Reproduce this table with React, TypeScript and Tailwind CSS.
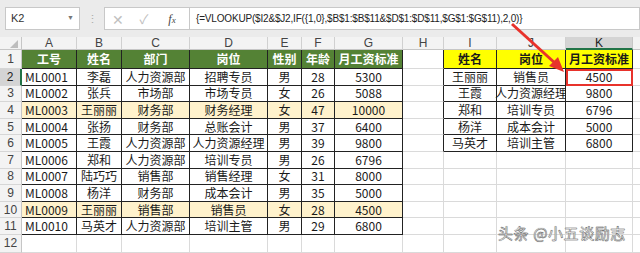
import React from 'react';

const cols = ['A', 'B', 'C', 'D', 'E', 'F', 'G', 'H', 'I', 'J', 'K'];

const main: string[][] = [
  ['工号', '姓名', '部门', '岗位', '性别', '年龄', '月工资标准'],
  ['ML0001', '李磊', '人力资源部', '招聘专员', '男', '28', '5300'],
  ['ML0002', '张兵', '市场部', '市场专员', '女', '26', '5088'],
  ['ML0003', '王丽丽', '财务部', '财务经理', '女', '47', '10000'],
  ['ML0004', '张扬', '财务部', '总账会计', '男', '37', '6400'],
  ['ML0005', '王霞', '人力资源部', '人力资源经理', '男', '39', '9800'],
  ['ML0006', '郑和', '人力资源部', '培训专员', '男', '26', '6796'],
  ['ML0007', '陆巧巧', '销售部', '销售经理', '女', '31', '8000'],
  ['ML0008', '杨洋', '财务部', '成本会计', '男', '35', '5000'],
  ['ML0009', '王丽丽', '销售部', '销售员', '女', '28', '4500'],
  ['ML0010', '马英才', '人力资源部', '培训主管', '男', '29', '6800'],
];

const lookup: string[][] = [
  ['姓名', '岗位', '月工资标准'],
  ['王丽丽', '销售员', '4500'],
  ['王霞', '人力资源经理', '9800'],
  ['郑和', '培训专员', '6796'],
  ['杨洋', '成本会计', '5000'],
  ['马英才', '培训主管', '6800'],
];

const font = 'font-["Noto_Sans_CJK_SC","Liberation_Sans",sans-serif]';

function Cell({ r, c }: { r: number; c: number }) {
  // r: 1..12, c: 0..10 (A..K)
  const inMain = r <= 11 && c <= 6;
  const inLookup = r <= 6 && c >= 8;
  let text = '';
  let cls = 'border-r border-b border-[#dadada] bg-white';
  if (inMain) {
    text = main[r - 1][c];
    cls = 'border-r border-b border-[#222]';
    if (r === 1) cls += ' bg-[#548235] text-white font-bold';
    else if (r === 4 || r === 10) cls += ' bg-[#fff2cc] text-[#1a1a1a]';
    else cls += ' bg-white text-[#1a1a1a]';
  } else if (inLookup) {
    text = lookup[r - 1][c - 8];
    cls = 'border-r border-b border-[#222] text-[#1a1a1a]';
    cls += r === 1 ? ' bg-[#ffff00] font-bold' : ' bg-white';
  } else if (c === 7 && r <= 6) {
    cls = 'border-r border-b border-r-[#222] border-b-[#dadada] bg-white';
  }
  const left = inMain && c === 0 && r > 1;
  const selected = r === 2 && c === 10;
  return (
    <div
      className={`${cls} flex items-center ${left ? 'justify-start pl-[3px]' : 'justify-center'} overflow-visible whitespace-nowrap text-[12px] leading-none ${
        selected ? 'outline-2 outline-[#e8322b] -outline-offset-2' : ''
      }`}
    >
      {text}
    </div>
  );
}

export default function App() {
  const rows = Array.from({ length: 12 }, (_, i) => i + 1);
  return (
    <div className={`relative w-[640px] h-[253px] overflow-hidden bg-white ${font}`}>
      {/* formula bar */}
      <div className="h-[37px] bg-[#ebebeb] flex items-start pt-[7px] pl-[5px] gap-0">
        <div className="w-[75px] h-[23px] bg-white border border-[#c8c8c8] flex items-center justify-between px-[5px] text-[11px] text-[#333] font-['Liberation_Sans',sans-serif]">
          <span>K2</span>
          <span className="text-[7px] text-[#777]">▼</span>
        </div>
        <div className="w-[24px] h-[23px] flex items-center justify-center text-[#aaa] text-[11px]">⋮</div>
        <div className="w-[85px] h-[23px] bg-white border border-[#c8c8c8] border-r-0 flex items-center text-[#c0c0c0]">
          <span className="w-[26px] text-center text-[14px] leading-none">✕</span>
          <span className="w-[26px] text-center text-[13px] leading-none">✓</span>
          <span className="w-[30px] text-center text-[12px] italic text-[#444] font-['Liberation_Serif',serif]">
            f<span className="text-[9px]">x</span>
          </span>
        </div>
        <div className="flex-1 h-[23px] bg-white border border-[#c8c8c8] flex items-center pl-[6px] text-[10px] tracking-[-0.18px] text-[#222] font-['Liberation_Sans',sans-serif] whitespace-nowrap">
          {'{=VLOOKUP($I2&$J2,IF({1,0},$B$1:$B$11&$D$1:$D$11,$G$1:$G$11),2,0)}'}
        </div>
      </div>

      {/* sheet */}
      <div className="grid grid-cols-[22px_55px_45px_68px_78px_34px_33px_68px_41px_53px_69px_67px_1fr] grid-rows-[13px_19px_repeat(10,16.6px)_1fr] h-[216px]">
        <div className="bg-[#f3f3f3] border-r border-b border-[#c6c6c6] flex items-end justify-end pr-[3px] pb-[1px]">
          <svg width="8" height="8" viewBox="0 0 8 8">
            <path d="M8 0 L8 8 L0 8 Z" fill="#bdbdbd" />
          </svg>
        </div>
        {cols.map((c) => (
          <div
            key={c}
            className={`border-r flex items-center justify-center text-[12px] leading-none font-['Liberation_Sans',sans-serif] ${
              c === 'K'
                ? 'bg-[#d4d4d4] border-[#c6c6c6] border-b-2 border-b-[#217346] text-[#222]'
                : 'bg-[#f3f3f3] border-[#d0d0d0] border-b border-b-[#c6c6c6] text-[#444]'
            }`}
          >
            {c}
          </div>
        ))}
        <div className="bg-[#f3f3f3] border-b border-[#c6c6c6]" />
        {rows.map((r) => (
          <React.Fragment key={r}>
            <div
              className={`flex items-center justify-center text-[12px] leading-none font-['Liberation_Sans',sans-serif] border-b border-b-[#d6d6d6] ${
                r === 2
                  ? 'bg-[#d4d4d4] border-r-2 border-r-[#217346] text-[#222]'
                  : 'bg-[#f3f3f3] border-r border-r-[#c6c6c6] text-[#444]'
              }`}
            >
              {r}
            </div>
            {cols.map((_, c) => (
              <Cell key={c} r={r} c={c} />
            ))}
            <div className="bg-white border-b border-[#dadada]" />
          </React.Fragment>
        ))}
      </div>

      {/* annotation arrow */}
      <svg className="absolute left-0 top-0 pointer-events-none" width="640" height="253">
        <line x1="512" y1="24" x2="556" y2="64" stroke="#e8322b" strokeWidth="3" />
        <path d="M564 72 L549 66 L558 57 Z" fill="#e8322b" />
      </svg>

      {/* watermark */}
      <div className="absolute left-[498px] top-[225px] text-[15px] leading-none tracking-[0.6px] text-[#fafafa] [-webkit-text-stroke:0.4px_#555] [text-shadow:0_0_1px_#999]">
        头条 @小五谈励志
      </div>
    </div>
  );
}
